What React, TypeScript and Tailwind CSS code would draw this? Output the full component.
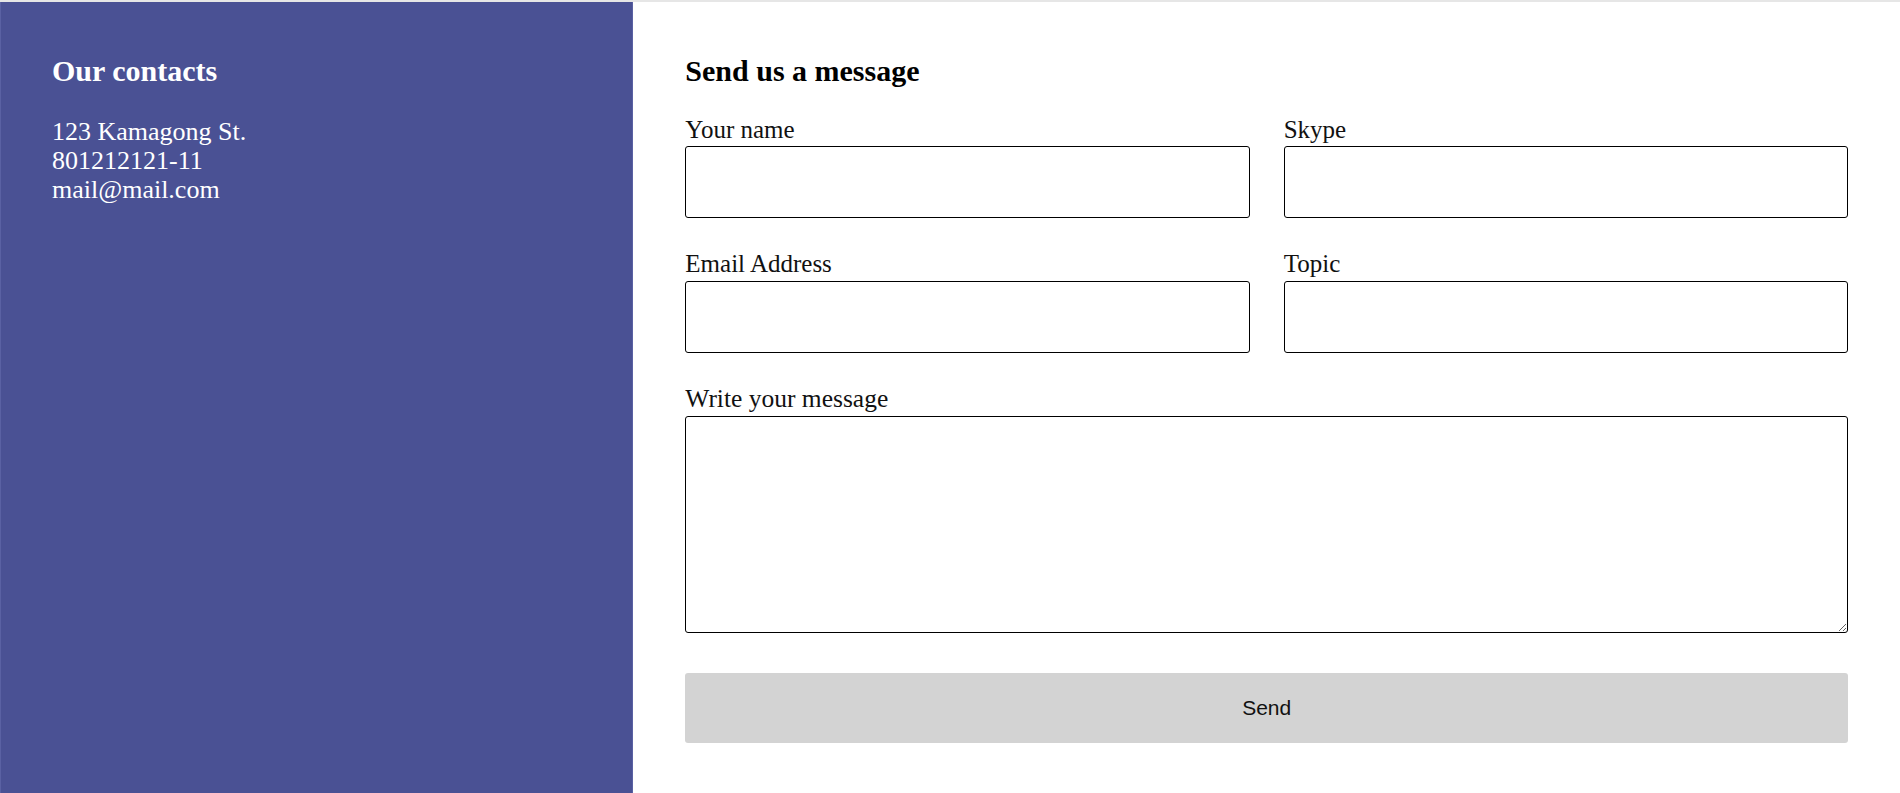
import React, { useState } from 'react';

type Field = { name: string; label: string };

const topFields: Field[] = [
    { name: 'name', label: 'Your name' },
    { name: 'skype', label: 'Skype' },
    { name: 'email', label: 'Email Address' },
    { name: 'topic', label: 'Topic' },
];

const contacts = ['123 Kamagong St.', '801212121-11', 'mail@mail.com'];

const inputClass = 'block w-full h-[72px] border border-black rounded-[3px] bg-white px-2 outline-none';

const App = () => {
    const [values, setValues] = useState<Record<string, string>>({});

    const update = (name: string, value: string) => setValues((prev) => ({ ...prev, [name]: value }));

    return (
        <div className="min-h-screen bg-white font-['Liberation_Serif',serif] text-black">
            <div className="h-[2px] bg-[#e6e6e6]" />
            <div className="grid grid-cols-3 min-h-[791px]">
                {/* contacts */}
                <div className="bg-[#4a5194] border-x border-[#5a61a3] pl-[51px] pr-[52px] pt-[52px] text-white">
                    <h3 className="text-[30px] leading-[34.5px] font-bold mb-[28px]">Our contacts</h3>
                    <div className="text-[26px] leading-[29px]">
                        {contacts.map((c) => (
                            <p key={c}>{c}</p>
                        ))}
                    </div>
                </div>

                {/* form */}
                <div className="col-span-2 px-[52px] pt-[52px]">
                    <h3 className="text-[30px] leading-[34.5px] font-bold mb-[27px]">Send us a message</h3>
                    <form onSubmit={(e) => e.preventDefault()}>
                        <div className="grid grid-cols-2 gap-x-[34px] gap-y-[32px]">
                            {topFields.map((f) => (
                                <div key={f.name}>
                                    <label htmlFor={f.name} className="block text-[25px] leading-[28.75px] mb-[2px] text-[#111]">{f.label}</label>
                                    <input
                                        id={f.name}
                                        className={inputClass}
                                        value={values[f.name] || ''}
                                        onChange={(e) => update(f.name, e.target.value)}
                                    />
                                </div>
                            ))}
                        </div>
                        <div className="mt-[32px]">
                            <label htmlFor="message" className="block text-[25.5px] leading-[28.75px] mb-[2px] text-[#111]">Write your message</label>
                            <textarea
                                id="message"
                                className="block w-full h-[217px] border border-black rounded-[3px] bg-white p-2 outline-none"
                                value={values.message || ''}
                                onChange={(e) => update('message', e.target.value)}
                            />
                        </div>
                        <button
                            type="submit"
                            className="mt-[40px] w-full h-[70px] rounded-[3px] bg-[#d3d3d3] font-['Liberation_Sans',Arial,sans-serif] text-[21px] text-[#111]"
                        >
                            Send
                        </button>
                    </form>
                </div>
            </div>
        </div>
    );
};

export default App;
